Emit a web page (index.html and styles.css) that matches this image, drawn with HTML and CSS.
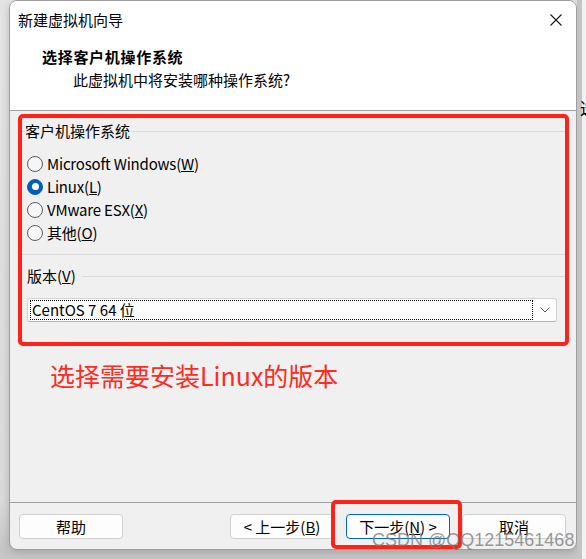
FILE: index.html
```html
<!DOCTYPE html>
<html lang="zh-CN">
<head>
<meta charset="utf-8">
<title>新建虚拟机向导</title>
<link rel="stylesheet" href="styles.css">
</head>
<body>
<div class="screen">
  <div class="window">
    <header class="header">
      <div class="titlebar">
        <span class="title">新建虚拟机向导</span>
        <svg class="close" width="12" height="12" viewBox="0 0 12 12"><path d="M0.5 0.5 L11.5 11.5 M11.5 0.5 L0.5 11.5" stroke="#1a1a1a" stroke-width="1.1" fill="none"/></svg>
      </div>
      <h1 class="heading">选择客户机操作系统</h1>
      <p class="subtitle">此虚拟机中将安装哪种操作系统?</p>
    </header>
    <main class="content">
      <fieldset class="group">
        <legend>客户机操作系统</legend>
        <div class="radio-row"><span class="radio"></span>Microsoft Windows(<u>W</u>)</div>
        <div class="radio-row"><span class="radio checked"></span>Linux(<u>L</u>)</div>
        <div class="radio-row"><span class="radio"></span>VMware ESX(<u>X</u>)</div>
        <div class="radio-row"><span class="radio"></span>其他(<u>O</u>)</div>
      </fieldset>
      <div class="version-row"><span>版本(<u>V</u>)</span><span class="rule"></span></div>
      <div class="combo">
        <span class="combo-value">CentOS 7 64 位</span>
        <span class="combo-arrow"><svg width="10" height="6" viewBox="0 0 10 6"><path d="M0.5 0.5 L5 5 L9.5 0.5" stroke="#5a5a5a" stroke-width="1" fill="none"/></svg></span>
      </div>
      <p class="note">选择需要安装Linux的版本</p>
    </main>
    <footer class="footer">
      <button class="btn">帮助</button>
      <div class="nav">
        <button class="btn">&lt; 上一步(<u>B</u>)</button>
        <button class="btn primary">下一步(<u>N</u>) &gt;</button>
        <button class="btn">取消</button>
      </div>
    </footer>
  </div>
  <div class="side"><span>选</span></div>
  <div class="mark mark-os"></div>
  <div class="mark mark-next"></div>
  <div class="watermark">CSDN @QQ1215461468</div>
</div>
</body>
</html>
```
FILE: styles.css
```css
* { box-sizing: border-box; }
html, body { margin: 0; padding: 0; }
body {
  font-family: "Noto Sans CJK SC", "Noto Sans", sans-serif;
  font-size: 15px;
  line-height: 20px;
  color: #000;
}
.screen {
  position: relative;
  width: 586px;
  height: 559px;
  display: flex;
  background: linear-gradient(to bottom, #e4e4e4 0, #dadada 500px, #c6c6c6 550px);
  overflow: hidden;
}
.window {
  margin-left: 9px;
  width: 568px;
  height: 550px;
  border: 1px solid #9e9e9e;
  border-radius: 8px;
  background: #f0f0f0;
  display: flex;
  flex-direction: column;
  overflow: hidden;
  box-shadow: 0 2px 8px rgba(0,0,0,0.18);
}
.header {
  height: 110px;
  flex: none;
  background: #fff;
  border-bottom: 1px solid #a0a0a0;
  padding-top: 9px;
}
.titlebar {
  height: 20px;
  display: flex;
  justify-content: space-between;
  align-items: center;
  padding: 0 14px 0 8px;
}
.heading {
  margin: 17px 0 0 32px;
  font-size: 15px;
  line-height: 20px;
  font-weight: bold;
  letter-spacing: 0.7px;
}
.subtitle {
  margin: 3px 0 0 63px;
}
.content {
  flex: 1;
  display: flex;
  flex-direction: column;
  align-items: flex-start;
}
.group {
  margin: 10px 9px 0 11px;
  align-self: stretch;
  border: 1px solid #dcdcdc;
  padding: 11px 0 10px 5px;
  min-width: 0;
}
.group legend {
  margin-left: -2px;
  padding: 0 2px 0 0;
  line-height: 20px;
}
.radio-row {
  height: 23px;
  display: flex;
  align-items: center;
  letter-spacing: -0.2px;
}
.radio {
  width: 16px;
  height: 16px;
  border-radius: 50%;
  border: 1px solid #5c5c5c;
  background: #f6f6f6;
  margin-right: 4px;
  display: flex;
  align-items: center;
  justify-content: center;
}
.radio.checked {
  background: #005fb8;
  border-color: #005fb8;
}
.radio.checked::after {
  content: "";
  width: 7px;
  height: 7px;
  border-radius: 50%;
  background: #fff;
}
.version-row {
  margin: 11px 9px 0 17px;
  align-self: stretch;
  height: 20px;
  display: flex;
  align-items: center;
}
.version-row .rule {
  flex: 1;
  border-top: 1px solid #dcdcdc;
  margin-left: 6px;
}
.combo {
  margin: 12px 19px 0 17px;
  align-self: stretch;
  height: 24px;
  border: 1px solid #d2d2d2;
  border-bottom-color: #b4b4b4;
  border-radius: 3px;
  background: #fdfdfd;
  display: flex;
  align-items: center;
  padding: 1px 0 1px 2px;
}
.combo-value {
  flex: 1;
  height: 20px;
  border: 1px dotted #000;
  line-height: 18px;
  padding-left: 1px;
}
.combo-arrow {
  width: 23px;
  display: flex;
  justify-content: center;
  align-items: center;
}
.note {
  margin: 38px 0 0 40px;
  font-size: 25px;
  line-height: 30px;
  color: #ff2a22;
}
.footer {
  height: 47px;
  flex: none;
  border-top: 1px solid #a0a0a0;
  padding: 11px 10px 0 9px;
  display: flex;
  justify-content: space-between;
  align-items: flex-start;
}
.nav {
  display: flex;
  gap: 12px;
}
.btn {
  width: 104px;
  height: 25px;
  border: 1px solid #d0d0d0;
  border-radius: 4px;
  background: #fdfdfd;
  font-family: inherit;
  font-size: 15px;
  line-height: 20px;
  color: #000;
  padding: 0;
}
.btn.primary {
  border-color: #0067c0;
}
.side {
  width: 9px;
  flex: none;
  background: linear-gradient(to right, #c4c4c4 0, #c4c4c4 5px, #f2f2f2 5px);
  padding-top: 98px;
  overflow: hidden;
}
.side span {
  display: block;
  margin-left: 3px;
  font-size: 17px;
  white-space: nowrap;
}
.mark {
  position: absolute;
  border: 4px solid #ff2218;
  border-radius: 5px;
}
.mark-os {
  left: 18px;
  top: 114px;
  width: 551px;
  height: 232px;
}
.mark-next {
  left: 331px;
  top: 500px;
  width: 131px;
  height: 49px;
}
.watermark {
  position: absolute;
  left: 372px;
  top: 529px;
  font-family: "Liberation Sans", Arial, sans-serif;
  font-size: 18px;
  line-height: 22px;
  color: rgba(120,120,120,0.75);
  white-space: nowrap;
}
```
